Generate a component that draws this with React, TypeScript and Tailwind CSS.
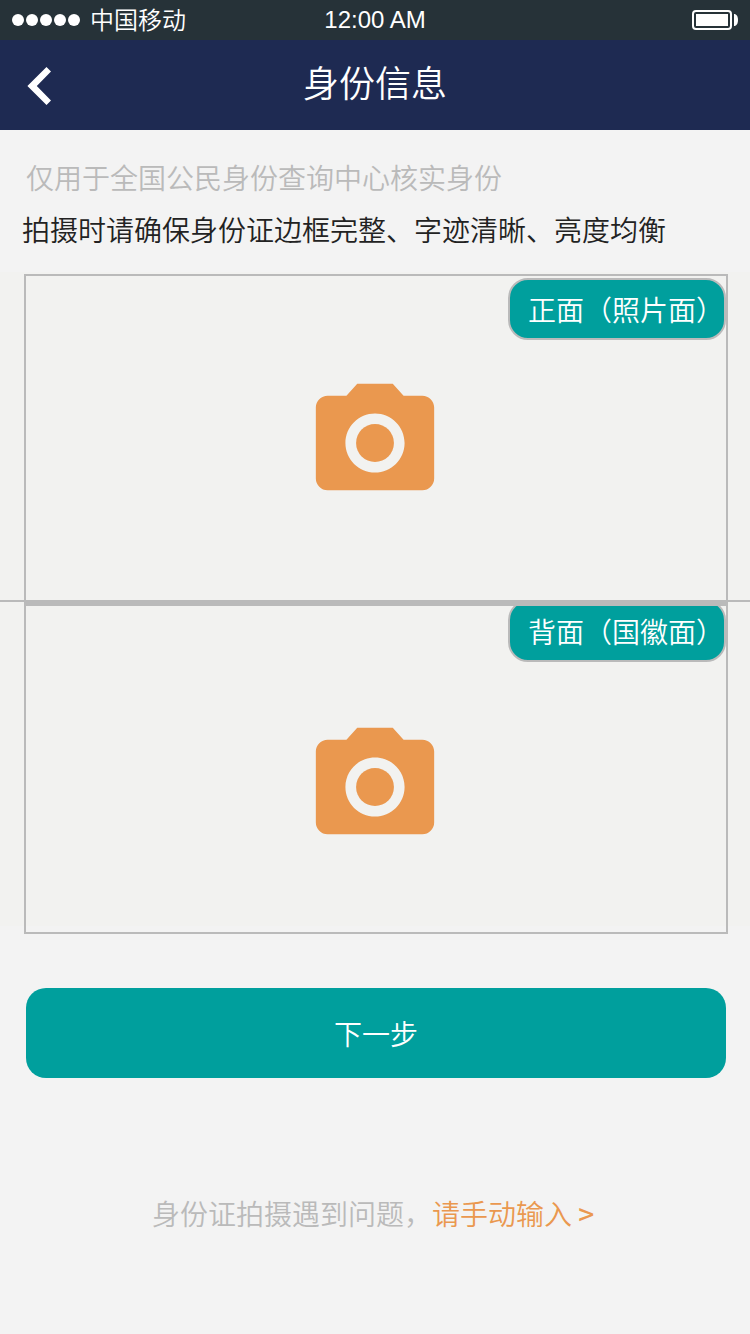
import React from "react";

const SIGNAL_DOTS = [0, 1, 2, 3, 4];

function StatusBar() {
  return (
    <div className="relative flex h-10 items-center justify-between bg-[#263238] px-3 text-2xl leading-[38px] text-white">
      <div className="flex h-10 items-center gap-[10px]">
        <div className="flex gap-[2px]" aria-hidden="true">
          {SIGNAL_DOTS.map((dot) => (
            <span key={dot} className="size-3 rounded-full bg-white" />
          ))}
        </div>
        <span className="self-start">中国移动</span>
      </div>
      <time className="absolute inset-x-0 text-center font-['Liberation_Sans',sans-serif] font-normal">
        12:00 AM
      </time>
      <svg className="h-5 w-[46px]" viewBox="0 0 46 20" aria-hidden="true">
        <rect x="1" y="1" width="38" height="18" rx="3" fill="none" stroke="#fff" strokeWidth="2" />
        <rect x="4" y="4" width="32" height="12" fill="#fff" />
        <path d="M42 4c2.600 0 4 2.600 4 6s-1.400 6-4 6z" fill="#fff" />
      </svg>
    </div>
  );
}

function Header() {
  return (
    <header className="grid h-[90px] grid-cols-[1fr_auto_1fr] items-center bg-[#1e2a52] text-white">
      <button type="button" aria-label="返回" className="ml-6 flex size-12 items-center">
        <svg className="h-12 w-8" viewBox="0 0 32 48" aria-hidden="true">
          <path d="M22.500 6L27 10.500L12.800 25L27 39.500L22.500 44L3.400 25z" fill="#fff" />
        </svg>
      </button>
      <h1 className="pb-2 text-4xl">身份信息</h1>
    </header>
  );
}

function CameraIcon() {
  return (
    <svg className="size-[142px]" viewBox="0 0 24 24" fill="#ea984f" aria-hidden="true">
      <circle cx="12" cy="12" r="3.200" />
      <path d="M9 2L7.170 4H4c-1.100 0-2 .9-2 2v12c0 1.100.9 2 2 2h16c1.100 0 2-.9 2-2V6c0-1.100-.9-2-2-2h-3.170L15 2H9zm3 15c-2.760 0-5-2.240-5-5s2.240-5 5-5 5 2.240 5 5-2.240 5-5 5z" />
    </svg>
  );
}

const TAG =
  "absolute right-0 flex h-[62px] items-center rounded-[20px] border-2 border-[#bababa] bg-[#009f9d] pl-[18px] text-[28px] text-white";

export default function App() {
  return (
    <div
      lang="zh-CN"
      className="min-h-screen bg-[#f3f3f3] font-['Noto_Sans_CJK_SC',sans-serif] font-[350]"
    >
      <StatusBar />
      <Header />
      <main>
        <div className="px-[22px] pt-[21px] pb-[17px] text-[28px] leading-[52px]">
          <p className="pl-1 text-[#bababa]">仅用于全国公民身份查询中心核实身份</p>
          <p className="text-[#222222]">拍摄时请确保身份证边框完整、字迹清晰、亮度均衡</p>
        </div>
        <div className="bg-[linear-gradient(#f2f2f0,#f2f2f0)] bg-[length:100%_calc(100%-8px)] bg-no-repeat">
          <div className="relative pt-[2px] pr-[22px] pl-6">
            <button
              type="button"
              className="relative flex h-[330px] w-full items-start justify-center overflow-hidden border-2 border-[#bababa] pt-24 pr-[2px]"
            >
              <CameraIcon />
              <span className={`${TAG} top-[2px]`}>正面（照片面）</span>
            </button>
            <span className="absolute inset-x-0 bottom-[2px] h-[2px] bg-[#bababa]" />
          </div>
          <div className="pr-[22px] pl-6">
            <button
              type="button"
              className="relative flex h-[330px] w-full items-start justify-center overflow-hidden border-2 border-[#bababa] pt-[110px] pr-[2px]"
            >
              <CameraIcon />
              <span className={`${TAG} top-[-6px]`}>背面（国徽面）</span>
            </button>
          </div>
        </div>
        <div className="pt-[54px] pr-6 pl-[26px]">
          <button
            type="button"
            className="h-[90px] w-full rounded-[20px] bg-[#009f9d] text-[28px] text-white"
          >
            下一步
          </button>
        </div>
        <p className="pt-[115px] pr-1 pb-20 text-center text-[28px] leading-10 text-[#bababa]">
          身份证拍摄遇到问题，
          <a href="#manual" className="text-[#ea984f]">
            请手动输入 <span className="font-medium">&gt;</span>
          </a>
        </p>
      </main>
    </div>
  );
}
